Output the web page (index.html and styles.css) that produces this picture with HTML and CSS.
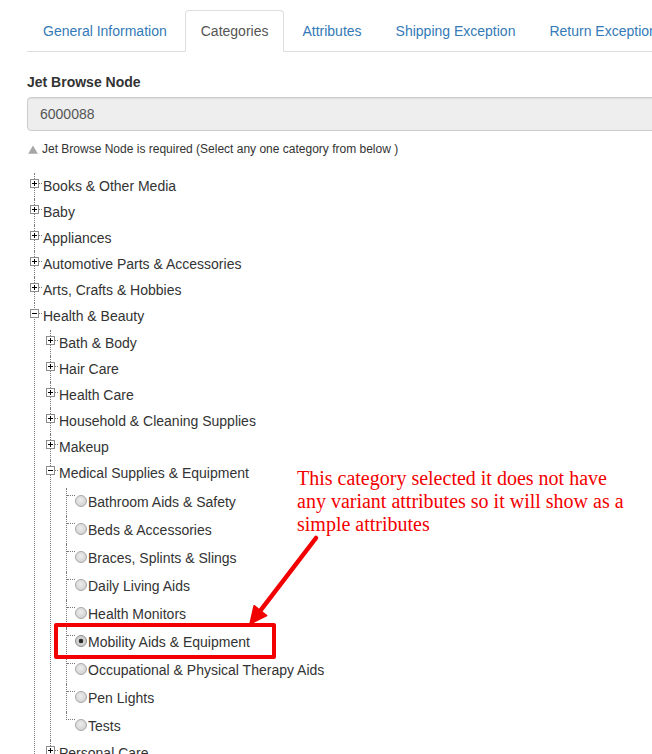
FILE: index.html
```html
<!DOCTYPE html>
<html lang="en">
<head>
<meta charset="utf-8">
<title>Categories</title>
<link rel="stylesheet" href="styles.css">
</head>
<body>
<div class="page">
  <ul class="tabs">
    <li><a href="#">General Information</a></li>
    <li class="active"><a href="#">Categories</a></li>
    <li><a href="#">Attributes</a></li>
    <li><a href="#">Shipping Exception</a></li>
    <li><a href="#">Return Exception</a></li>
  </ul>

  <div class="form-group">
    <label class="field-label">Jet Browse Node</label>
    <div class="field-input">6000088</div>
    <p class="help"><svg class="warn" width="10" height="9" viewBox="0 0 10 9"><path d="M5 0.5L9.8 8.8H0.2Z" fill="#a6a6a6"/></svg>Jet Browse Node is required (Select any one category from below )</p>
  </div>

  <div class="tree">
    <ul class="level">
      <li><div class="node"><span class="tog"><svg width="9" height="9" viewBox="0 0 9 9"><rect x="0.5" y="0.5" width="8" height="8" fill="#fff" stroke="#8c8c8c"/><path d="M2 4.5h5M4.5 2v5" stroke="#000"/></svg></span><span class="dash"></span><span class="label">Books &amp; Other Media</span></div></li>
      <li><div class="node"><span class="tog"><svg width="9" height="9" viewBox="0 0 9 9"><rect x="0.5" y="0.5" width="8" height="8" fill="#fff" stroke="#8c8c8c"/><path d="M2 4.5h5M4.5 2v5" stroke="#000"/></svg></span><span class="dash"></span><span class="label">Baby</span></div></li>
      <li><div class="node"><span class="tog"><svg width="9" height="9" viewBox="0 0 9 9"><rect x="0.5" y="0.5" width="8" height="8" fill="#fff" stroke="#8c8c8c"/><path d="M2 4.5h5M4.5 2v5" stroke="#000"/></svg></span><span class="dash"></span><span class="label">Appliances</span></div></li>
      <li><div class="node"><span class="tog"><svg width="9" height="9" viewBox="0 0 9 9"><rect x="0.5" y="0.5" width="8" height="8" fill="#fff" stroke="#8c8c8c"/><path d="M2 4.5h5M4.5 2v5" stroke="#000"/></svg></span><span class="dash"></span><span class="label">Automotive Parts &amp; Accessories</span></div></li>
      <li><div class="node"><span class="tog"><svg width="9" height="9" viewBox="0 0 9 9"><rect x="0.5" y="0.5" width="8" height="8" fill="#fff" stroke="#8c8c8c"/><path d="M2 4.5h5M4.5 2v5" stroke="#000"/></svg></span><span class="dash"></span><span class="label">Arts, Crafts &amp; Hobbies</span></div></li>
      <li>
        <div class="node"><span class="tog"><svg width="9" height="9" viewBox="0 0 9 9"><rect x="0.5" y="0.5" width="8" height="8" fill="#fff" stroke="#8c8c8c"/><path d="M2 4.5h5" stroke="#000"/></svg></span><span class="dash"></span><span class="label">Health &amp; Beauty</span></div>
        <ul class="level sub">
          <li><div class="node"><span class="tog"><svg width="9" height="9" viewBox="0 0 9 9"><rect x="0.5" y="0.5" width="8" height="8" fill="#fff" stroke="#8c8c8c"/><path d="M2 4.5h5M4.5 2v5" stroke="#000"/></svg></span><span class="dash"></span><span class="label">Bath &amp; Body</span></div></li>
          <li><div class="node"><span class="tog"><svg width="9" height="9" viewBox="0 0 9 9"><rect x="0.5" y="0.5" width="8" height="8" fill="#fff" stroke="#8c8c8c"/><path d="M2 4.5h5M4.5 2v5" stroke="#000"/></svg></span><span class="dash"></span><span class="label">Hair Care</span></div></li>
          <li><div class="node"><span class="tog"><svg width="9" height="9" viewBox="0 0 9 9"><rect x="0.5" y="0.5" width="8" height="8" fill="#fff" stroke="#8c8c8c"/><path d="M2 4.5h5M4.5 2v5" stroke="#000"/></svg></span><span class="dash"></span><span class="label">Health Care</span></div></li>
          <li><div class="node"><span class="tog"><svg width="9" height="9" viewBox="0 0 9 9"><rect x="0.5" y="0.5" width="8" height="8" fill="#fff" stroke="#8c8c8c"/><path d="M2 4.5h5M4.5 2v5" stroke="#000"/></svg></span><span class="dash"></span><span class="label">Household &amp; Cleaning Supplies</span></div></li>
          <li><div class="node"><span class="tog"><svg width="9" height="9" viewBox="0 0 9 9"><rect x="0.5" y="0.5" width="8" height="8" fill="#fff" stroke="#8c8c8c"/><path d="M2 4.5h5M4.5 2v5" stroke="#000"/></svg></span><span class="dash"></span><span class="label">Makeup</span></div></li>
          <li>
            <div class="node"><span class="tog"><svg width="9" height="9" viewBox="0 0 9 9"><rect x="0.5" y="0.5" width="8" height="8" fill="#fff" stroke="#8c8c8c"/><path d="M2 4.5h5" stroke="#000"/></svg></span><span class="dash"></span><span class="label">Medical Supplies &amp; Equipment</span></div>
            <ul class="level leaves">
              <li><div class="leaf"><span class="conn"></span><span class="radio"></span><span class="label">Bathroom Aids &amp; Safety</span></div></li>
              <li><div class="leaf"><span class="conn"></span><span class="radio"></span><span class="label">Beds &amp; Accessories</span></div></li>
              <li><div class="leaf"><span class="conn"></span><span class="radio"></span><span class="label">Braces, Splints &amp; Slings</span></div></li>
              <li><div class="leaf"><span class="conn"></span><span class="radio"></span><span class="label">Daily Living Aids</span></div></li>
              <li><div class="leaf"><span class="conn"></span><span class="radio"></span><span class="label">Health Monitors</span></div></li>
              <li><div class="leaf"><span class="conn"></span><span class="radio checked"></span><span class="label">Mobility Aids &amp; Equipment</span></div></li>
              <li><div class="leaf"><span class="conn"></span><span class="radio"></span><span class="label">Occupational &amp; Physical Therapy Aids</span></div></li>
              <li><div class="leaf"><span class="conn"></span><span class="radio"></span><span class="label">Pen Lights</span></div></li>
              <li class="last"><div class="leaf"><span class="conn"></span><span class="radio"></span><span class="label">Tests</span></div></li>
            </ul>
          </li>
          <li><div class="node"><span class="tog"><svg width="9" height="9" viewBox="0 0 9 9"><rect x="0.5" y="0.5" width="8" height="8" fill="#fff" stroke="#8c8c8c"/><path d="M2 4.5h5M4.5 2v5" stroke="#000"/></svg></span><span class="dash"></span><span class="label">Personal Care</span></div></li>
        </ul>
      </li>
    </ul>
  </div>

  <div class="note">This category selected it does not have<br>any variant attributes so it will show as a<br>simple attributes</div>
  <div class="highlight"></div>
  <svg class="arrow" width="652" height="754" viewBox="0 0 652 754">
    <line x1="316" y1="538" x2="260.4" y2="610.6" stroke="#f20000" stroke-width="4.5" stroke-linecap="round"/>
    <path d="M250 624L254.1 605.7L266.7 615.5Z" fill="#f20000" stroke="#f20000" stroke-width="1.5" stroke-linejoin="round"/>
  </svg>
</div>
</body>
</html>
```

FILE: styles.css
```css
html, body {
  margin: 0;
  padding: 0;
  overflow: hidden;
  background: #fff;
}

body {
  font-family: "Liberation Sans", Arial, Helvetica, sans-serif;
  font-size: 14px;
  line-height: 20px;
  color: #333;
}

.page {
  position: relative;
  width: 760px;
  padding: 10px 0 0 27px;
}

/* Tabs */
.tabs {
  display: flex;
  flex-wrap: nowrap;
  list-style: none;
  margin: 0;
  padding: 0;
  border-bottom: 1px solid #ddd;
  white-space: nowrap;
}

.tabs li {
  margin-bottom: -1px;
  margin-right: 2px;
}

.tabs a {
  display: block;
  padding: 10px 15px;
  line-height: 20px;
  border: 1px solid transparent;
  border-radius: 4px 4px 0 0;
  color: #337ab7;
  text-decoration: none;
}

.tabs li.active a {
  color: #555;
  background: #fff;
  border-color: #ddd #ddd transparent #ddd;
}

/* Form */
.form-group {
  margin-top: 20px;
}

.field-label {
  display: block;
  font-weight: bold;
  margin-bottom: 5px;
  line-height: 20px;
}

.field-input {
  box-sizing: border-box;
  height: 34px;
  padding: 6px 12px;
  line-height: 20px;
  color: #555;
  background: #eee;
  border: 1px solid #ccc;
  border-radius: 4px;
  box-shadow: inset 0 1px 1px rgba(0, 0, 0, 0.075);
}

.help {
  display: flex;
  align-items: center;
  margin: 10px 0 15px 1px;
  font-size: 12px;
  line-height: 17px;
  color: #333;
}

.warn {
  margin-right: 4px;
  margin-top: -1px;
}

/* Tree */
.tree ul {
  list-style: none;
  margin: 0;
  padding: 0;
}

.tree > .level {
  margin-left: 7px;
}

.tree li {
  border-left: 1px dotted #7a7a7a;
}

.tree .sub {
  margin-left: 15px;
  padding-top: 1px;
}

.tree .leaves {
  margin-left: 15px;
  padding-top: 2px;
}

.tree li.last {
  border-left: none;
}

.node {
  display: flex;
  align-items: flex-start;
  height: 26px;
  margin-left: -5px;
}

.tog {
  display: block;
  width: 9px;
  height: 9px;
  margin-top: 6px;
  background: #fff;
}

.tog svg {
  display: block;
}

.dash {
  display: block;
  width: 3px;
  margin: 10px 1px 0 0;
  border-top: 1px dotted #7a7a7a;
}

.label {
  display: block;
  line-height: 26px;
  white-space: nowrap;
  color: #333;
}

.leaf {
  display: flex;
  align-items: flex-start;
  height: 28px;
}

.leaf .label {
  line-height: 28px;
  margin-left: 1px;
}

.conn {
  display: block;
  width: 8px;
  height: 8px;
  border-bottom: 1px dotted #7a7a7a;
  box-sizing: border-box;
  margin-top: 0;
}

.last .conn {
  width: 9px;
  border-left: 1px dotted #7a7a7a;
}

.radio {
  display: block;
  box-sizing: border-box;
  width: 12px;
  height: 12px;
  margin-top: 7px;
  border-radius: 50%;
  border: 1px solid #a8a8a8;
  background: radial-gradient(circle at 45% 40%, #ededed 0%, #d8d8d8 60%, #c6c6c6 100%);
  position: relative;
}

.radio.checked {
  border-color: #8a8a8a;
  background: radial-gradient(circle at 50% 50%, #222 0, #333 2px, #d0d0d0 2.6px, #cfcfcf 100%);
}

/* Annotations overlaying the screenshot */
.note {
  position: absolute;
  left: 297px;
  top: 467px;
  font-family: "Liberation Serif", "Times New Roman", serif;
  font-size: 20px;
  line-height: 23px;
  color: #f20000;
  white-space: nowrap;
}

.highlight {
  position: absolute;
  left: 54px;
  top: 623px;
  width: 222px;
  height: 36px;
  box-sizing: border-box;
  border: 4px solid #f20000;
  border-radius: 2px;
}

.arrow {
  position: absolute;
  left: 0;
  top: 0;
  pointer-events: none;
}
```
